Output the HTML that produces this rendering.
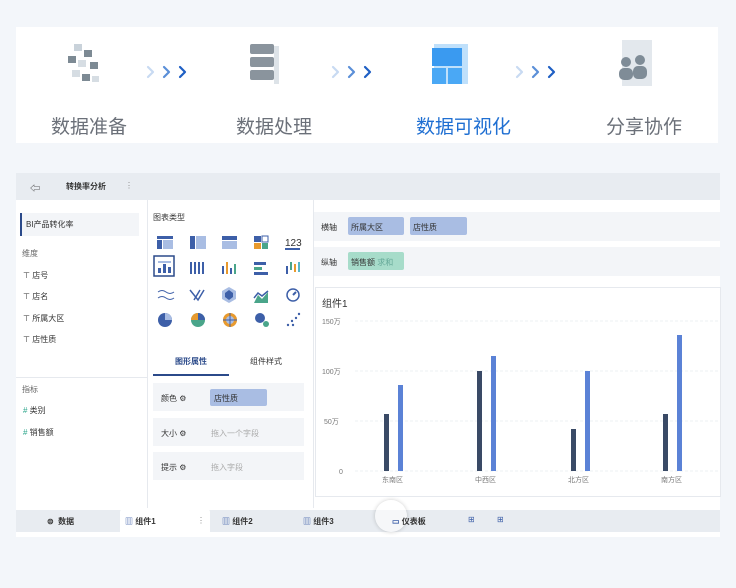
<!DOCTYPE html>
<html><head><meta charset="utf-8"><style>
*{margin:0;padding:0;box-sizing:border-box}
body{width:736px;height:588px;background:#f3f6fa;font-family:"Liberation Sans","Noto Sans CJK SC",sans-serif;position:relative;overflow:hidden;color:#333}
.a{position:absolute}
.top{left:16px;top:27px;width:702px;height:116px;background:#fff}
.step{font-size:19px;color:#6b7079;top:112px}
.t{font-size:8px;color:#333}
</style></head><body>
<div class="a top"></div>
<svg class="a" style="left:64px;top:40px" width="46" height="50"><g fill="#7d8a94"><rect x="10" y="4" width="8" height="7" fill="#c9d2da"/><rect x="20" y="10" width="8" height="7"/><rect x="4" y="16" width="8" height="7"/><rect x="14" y="20" width="8" height="7" fill="#d6dde3"/><rect x="26" y="22" width="8" height="7"/><rect x="8" y="30" width="8" height="7" fill="#d6dde3"/><rect x="18" y="34" width="8" height="7"/><rect x="28" y="36" width="7" height="6" fill="#d6dde3"/></g></svg>
<svg class="a" style="left:244px;top:40px" width="40" height="50"><g fill="#8a949d"><rect x="6" y="4" width="24" height="10" rx="2"/><rect x="6" y="17" width="24" height="10" rx="2"/><rect x="6" y="30" width="24" height="10" rx="2"/></g><rect x="30" y="6" width="5" height="38" fill="#dde3e8"/></svg>
<svg class="a" style="left:428px;top:40px" width="46" height="50"><rect x="6" y="4" width="34" height="40" fill="#bfe0fb"/><rect x="4" y="8" width="30" height="18" fill="#3a9af0"/><rect x="4" y="28" width="14" height="16" fill="#4aa8f5"/><rect x="20" y="28" width="14" height="16" fill="#4aa8f5"/></svg>
<svg class="a" style="left:612px;top:38px" width="46" height="54"><rect x="10" y="2" width="30" height="46" fill="#e3e8ed"/><g fill="#7f8c97"><circle cx="14" cy="24" r="5"/><rect x="7" y="30" width="14" height="12" rx="5"/><circle cx="28" cy="22" r="5"/><rect x="21" y="28" width="14" height="13" rx="5"/></g></svg>
<svg class="a" style="left:0;top:60px" width="736" height="24" fill="none" stroke-width="2.2" stroke-linecap="round" stroke-linejoin="round">
<g transform="translate(147,0)"><path d="M1 7l5 5-5 5" stroke="#c8daf2"/><path d="M17 7l5 5-5 5" stroke="#5b8fd8"/><path d="M33 7l5 5-5 5" stroke="#1f5fc4"/></g>
<g transform="translate(332,0)"><path d="M1 7l5 5-5 5" stroke="#c8daf2"/><path d="M17 7l5 5-5 5" stroke="#5b8fd8"/><path d="M33 7l5 5-5 5" stroke="#1f5fc4"/></g>
<g transform="translate(516,0)"><path d="M1 7l5 5-5 5" stroke="#c8daf2"/><path d="M17 7l5 5-5 5" stroke="#5b8fd8"/><path d="M33 7l5 5-5 5" stroke="#1f5fc4"/></g>
</svg>
<div class="a step" style="left:51px">数据准备</div>
<div class="a step" style="left:236px">数据处理</div>
<div class="a step" style="left:416px;color:#1f6fd2">数据可视化</div>
<div class="a step" style="left:606px">分享协作</div>

<div class="a" style="left:16px;top:173px;width:704px;height:364px;background:#fff"></div>
<div class="a" style="left:16px;top:173px;width:704px;height:27px;background:#e8ecf1"></div>
<div class="a t" style="left:30px;top:180px;font-size:10px">⇦</div>
<div class="a t" style="left:66px;top:181px;font-weight:bold">转换率分析</div>
<div class="a t" style="left:125px;top:181px;color:#888">⋮</div>
<div class="a" style="left:147px;top:200px;width:1px;height:308px;background:#e6e9ee"></div>
<div class="a" style="left:20px;top:213px;width:119px;height:23px;background:#f3f5f8;border-left:2px solid #2b4a8a"></div>
<div class="a t" style="left:26px;top:219px">BI产品转化率</div>
<div class="a t" style="left:22px;top:248px;color:#666">维度</div>
<div class="a t" style="left:23px;top:270px">⊤ 店号</div>
<div class="a t" style="left:23px;top:291px">⊤ 店名</div>
<div class="a t" style="left:23px;top:313px">⊤ 所属大区</div>
<div class="a t" style="left:23px;top:334px">⊤ 店性质</div>
<div class="a" style="left:16px;top:377px;width:131px;height:1px;background:#e6e9ee"></div>
<div class="a t" style="left:22px;top:384px;color:#666">指标</div>
<div class="a t" style="left:23px;top:405px"><span style="color:#2aa58a">#</span> 类别</div>
<div class="a t" style="left:23px;top:427px"><span style="color:#2aa58a">#</span> 销售额</div>
<div class="a" style="left:313px;top:200px;width:1px;height:308px;background:#e6e9ee"></div>
<div class="a t" style="left:153px;top:212px">图表类型</div>
<svg class="a" style="left:150px;top:228px" width="160" height="110">
<g fill="#3d5fa8"><rect x="7" y="8" width="16" height="3"/><rect x="7" y="12" width="5" height="9"/></g><rect x="13" y="12" width="10" height="9" fill="#a9bde3"/>
<rect x="40" y="8" width="5" height="13" fill="#3d5fa8"/><rect x="46" y="8" width="10" height="13" fill="#a9bde3"/>
<rect x="72" y="8" width="15" height="4" fill="#3d5fa8"/><rect x="72" y="13" width="15" height="8" fill="#a9bde3"/>
<rect x="104" y="8" width="7" height="6" fill="#3d5fa8"/><rect x="104" y="15" width="7" height="6" fill="#e89a2e"/><rect x="112" y="15" width="6" height="6" fill="#4aa58a"/><rect x="112" y="8" width="6" height="6" fill="none" stroke="#3d5fa8"/>
<text x="135" y="18" font-size="10" fill="#333" font-family="Liberation Sans">123</text><rect x="135" y="20" width="15" height="2" fill="#3d5fa8"/>
<rect x="4" y="28" width="20" height="20" fill="#fff" stroke="#2b4a8a" stroke-width="1.5"/>
<g fill="#3d5fa8"><rect x="8" y="40" width="3" height="5"/><rect x="13" y="36" width="3" height="9"/><rect x="18" y="39" width="3" height="6"/></g><rect x="8" y="33" width="13" height="2" fill="#a9bde3"/>
<g fill="#3d5fa8"><rect x="40" y="34" width="2" height="12"/><rect x="44" y="34" width="2" height="12"/><rect x="48" y="34" width="2" height="12"/><rect x="52" y="34" width="2" height="12"/></g>
<g fill="#3d5fa8"><rect x="72" y="38" width="2" height="8"/><rect x="76" y="34" width="2" height="12" fill="#e89a2e"/><rect x="80" y="40" width="2" height="6"/><rect x="84" y="36" width="2" height="10" fill="#4aa58a"/></g>
<g fill="#3d5fa8"><rect x="104" y="34" width="12" height="3"/><rect x="104" y="39" width="8" height="3" fill="#4aa58a"/><rect x="104" y="44" width="14" height="3"/></g>
<g><rect x="136" y="38" width="2" height="8" fill="#3d5fa8"/><rect x="140" y="34" width="2" height="8" fill="#4aa58a"/><rect x="144" y="36" width="2" height="8" fill="#e89a2e"/><rect x="148" y="34" width="2" height="10" fill="#58b6c9"/></g>
<path d="M8 64q4-3 8 0t8 0M8 70q4-3 8 0t8 0" stroke="#3d5fa8" fill="none"/>
<path d="M40 62l8 10 6-10M44 72l6-10" stroke="#3d5fa8" fill="none" stroke-width="1.5"/>
<polygon points="79,59 86,63 86,71 79,75 72,71 72,63" fill="#a9bde3"/><polygon points="79,62 83,65 83,69 79,72 75,69 75,65" fill="#3d5fa8"/>
<path d="M104 75l4-8 4 4 6-7v11z" fill="#4aa58a"/><path d="M104 70l4-5 4 3 6-5" stroke="#3d5fa8" fill="none" stroke-width="1.5"/>
<circle cx="143" cy="67" r="6" fill="none" stroke="#3d5fa8" stroke-width="1.5"/><path d="M143 67l3-3" stroke="#3d5fa8" stroke-width="2"/>
<circle cx="15" cy="92" r="7" fill="#3d5fa8"/><path d="M15 92V85a7 7 0 0 1 7 7z" fill="#a9bde3"/>
<circle cx="48" cy="92" r="7" fill="#4aa58a"/><path d="M48 92V85a7 7 0 0 1 7 7z" fill="#3d5fa8"/><path d="M48 92H41a7 7 0 0 1 7-7z" fill="#e89a2e"/>
<circle cx="80" cy="92" r="7" fill="#e89a2e"/><circle cx="80" cy="92" r="4" fill="#a9bde3"/><path d="M73 92h14M80 85v14" stroke="#3d5fa8"/>
<circle cx="110" cy="90" r="5" fill="#3d5fa8"/><circle cx="116" cy="96" r="3" fill="#4aa58a"/>
<g fill="#3d5fa8"><circle cx="138" cy="97" r="1.2"/><circle cx="142" cy="93" r="1.2"/><circle cx="146" cy="90" r="1.2"/><circle cx="149" cy="86" r="1.2"/><circle cx="143" cy="97" r="1.2"/></g>
</svg>
<div class="a t" style="left:175px;top:356px;color:#2b4a8a;font-weight:bold">图形属性</div>
<div class="a t" style="left:250px;top:356px">组件样式</div>
<div class="a" style="left:153px;top:374px;width:76px;height:2px;background:#2b4a8a"></div>
<div class="a" style="left:153px;top:383px;width:151px;height:28px;background:#f3f5f8"></div>
<div class="a" style="left:153px;top:418px;width:151px;height:28px;background:#f3f5f8"></div>
<div class="a" style="left:153px;top:452px;width:151px;height:28px;background:#f3f5f8"></div>
<div class="a t" style="left:161px;top:393px">颜色 ⚙</div>
<div class="a" style="left:210px;top:389px;width:57px;height:17px;background:#a9bde3;border-radius:2px"></div>
<div class="a t" style="left:214px;top:393px">店性质</div>
<div class="a t" style="left:161px;top:428px">大小 ⚙</div>
<div class="a t" style="left:211px;top:428px;color:#aaa">拖入一个字段</div>
<div class="a t" style="left:161px;top:462px">提示 ⚙</div>
<div class="a t" style="left:211px;top:462px;color:#aaa">拖入字段</div>
<div class="a" style="left:314px;top:212px;width:406px;height:29px;background:#f3f5f8"></div>
<div class="a" style="left:314px;top:247px;width:406px;height:29px;background:#f3f5f8"></div>
<div class="a t" style="left:321px;top:222px">横轴</div>
<div class="a" style="left:348px;top:217px;width:56px;height:18px;background:#a9bde3;border-radius:2px"></div>
<div class="a" style="left:410px;top:217px;width:57px;height:18px;background:#a9bde3;border-radius:2px"></div>
<div class="a t" style="left:351px;top:222px">所属大区</div>
<div class="a t" style="left:413px;top:222px">店性质</div>
<div class="a t" style="left:321px;top:257px">纵轴</div>
<div class="a" style="left:348px;top:252px;width:56px;height:18px;background:#a7dcca;border-radius:2px"></div>
<div class="a t" style="left:351px;top:257px">销售额 <span style="color:#6a9">求和</span></div>
<div class="a" style="left:315px;top:287px;width:406px;height:210px;border:1px solid #e6e9ee;background:#fff"></div>
<div class="a" style="left:322px;top:295px;font-size:10px">组件1</div>
<svg class="a" style="left:315px;top:310px" width="406" height="180">
<g stroke="#eef0f3" stroke-dasharray="3 2"><line x1="40" y1="11" x2="405" y2="11"/><line x1="40" y1="61" x2="405" y2="61"/><line x1="40" y1="111" x2="405" y2="111"/><line x1="40" y1="161" x2="405" y2="161"/></g>
<g font-size="7" fill="#777" font-family="Liberation Sans,Noto Sans CJK SC,sans-serif"><text x="7" y="14">150万</text><text x="7" y="64">100万</text><text x="9" y="114">50万</text><text x="24" y="164">0</text>
<text x="67" y="172">东南区</text><text x="160" y="172">中西区</text><text x="253" y="172">北方区</text><text x="346" y="172">南方区</text></g>
<g fill="#3a4a66"><rect x="69" y="104" width="5" height="57"/><rect x="162" y="61" width="5" height="100"/><rect x="256" y="119" width="5" height="42"/><rect x="348" y="104" width="5" height="57"/></g>
<g fill="#5b82d6"><rect x="83" y="75" width="5" height="86"/><rect x="176" y="46" width="5" height="115"/><rect x="270" y="61" width="5" height="100"/><rect x="362" y="25" width="5" height="136"/></g>
</svg>
<div class="a" style="left:16px;top:510px;width:704px;height:22px;background:#e8ecf1"></div>
<div class="a" style="left:120px;top:509px;width:90px;height:24px;background:#fff;border-radius:3px 3px 0 0"></div>
<div class="a t" style="left:47px;top:516px;font-weight:bold">⊜ &nbsp;数据</div>
<div class="a t" style="left:125px;top:516px;font-weight:bold"><span style="color:#3d5fa8">▥</span> 组件1</div>
<div class="a t" style="left:197px;top:516px;color:#888">⋮</div>
<div class="a t" style="left:222px;top:516px;font-weight:bold"><span style="color:#3d5fa8">▥</span> 组件2</div>
<div class="a t" style="left:303px;top:516px;font-weight:bold"><span style="color:#3d5fa8">▥</span> 组件3</div>
<div class="a" style="left:375px;top:500px;width:32px;height:32px;border-radius:50%;background:rgba(255,255,255,.6);box-shadow:0 0 4px rgba(0,0,0,.2)"></div>
<div class="a t" style="left:392px;top:516px;font-weight:bold"><span style="color:#3d5fa8">▭</span> 仪表板</div>
<div class="a t" style="left:468px;top:515px;color:#3d5fa8">⊞</div>
<div class="a t" style="left:497px;top:515px;color:#3d5fa8">⊞</div>
</body></html>
